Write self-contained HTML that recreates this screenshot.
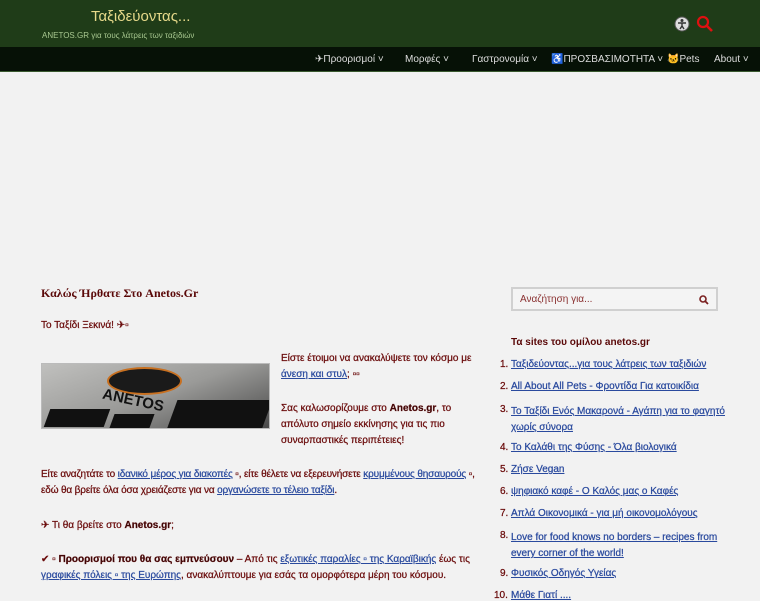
<!DOCTYPE html>
<html><head><meta charset="utf-8"><style>
*{margin:0;padding:0;box-sizing:border-box}
body{width:760px;height:600px;overflow:hidden;background:#f2f2f2;font-family:"Liberation Sans",sans-serif;color:#6a0b0b;position:relative}
.hdr{position:absolute;left:0;top:0;width:760px;height:47px;background:#1f3c18}
.t1{position:absolute;left:91px;top:8px;font-size:15px;color:#e6d98a}
.t2{position:absolute;left:42px;top:31px;font-size:8px;color:#a8c890}
.nav{position:absolute;left:0;top:47px;width:760px;height:25px;background:#061106;border-bottom:1px solid #3a5a30}
.nav span{position:absolute;top:7px;font-size:10px;color:#ddd}
.a{position:absolute;font-size:10px;line-height:16px;-webkit-text-stroke:0.25px #6a0b0b}
a{color:#2a4a9e;text-decoration:underline;-webkit-text-stroke:0.25px #2a4a9e}
b{color:#3a0606}
.side{position:absolute;left:511px;font-size:10px;color:#2a4a9e;text-decoration:underline;-webkit-text-stroke:0.25px #2a4a9e}
.num{position:absolute;font-size:10px;color:#6a0b0b;-webkit-text-stroke:0.25px #6a0b0b}
</style></head><body>
<div class="hdr"><div class="t1">Ταξιδεύοντας...</div><div class="t2">ANETOS.GR για τους λάτρεις των ταξιδιών</div>
<svg style="position:absolute;left:674px;top:16px" width="16" height="16"><circle cx="8" cy="8" r="7" fill="#ddd" stroke="#555"/><circle cx="8" cy="4.5" r="1.5" fill="#333"/><path d="M4 7h8M8 7v3l-2 3M8 10l2 3" stroke="#333" stroke-width="1.4" fill="none"/></svg>
<svg style="position:absolute;left:696px;top:15px" width="18" height="18"><circle cx="7" cy="7" r="5" stroke="#e01010" stroke-width="2.2" fill="none"/><path d="M11 11l5 5" stroke="#e01010" stroke-width="2.6"/></svg></div>
<div class="nav"><span style="left:315px">✈Προορισμοί ˅</span><span style="left:405px">Μορφές ˅</span><span style="left:472px">Γαστρονομία ˅</span><span style="left:551px">♿ΠΡΟΣΒΑΣΙΜΟΤΗΤΑ ˅</span><span style="left:667px">🐱Pets</span><span style="left:714px">About ˅</span></div>
<div style="position:absolute;left:41px;top:286px;font-family:'Liberation Serif',serif;font-weight:bold;font-size:12px;color:#5a0808">Καλώς Ήρθατε Στο Anetos.Gr</div>
<div class="a" style="left:41px;top:318px">Το Ταξίδι Ξεκινά! ✈▫</div>
<div style="position:absolute;left:41px;top:363px;width:229px;height:66px;background:linear-gradient(160deg,#c0c0be,#9a9a98 50%,#4a4a4a);border:1px solid #bbb;overflow:hidden"><div style="position:absolute;left:65px;top:3px;width:75px;height:28px;border-radius:50%;background:#1a1a1a;border:2px solid #c87020"></div><div style="position:absolute;left:60px;top:28px;font-weight:bold;font-size:15px;color:#111;transform:rotate(12deg)">ANETOS</div><div style="position:absolute;left:5px;top:45px;width:60px;height:18px;background:#111;transform:skew(-20deg)"></div><div style="position:absolute;left:130px;top:36px;width:95px;height:30px;background:#111;transform:skew(-20deg)"></div><div style="position:absolute;left:70px;top:50px;width:40px;height:14px;background:#111;transform:skew(-20deg)"></div></div>
<div class="a" style="left:281px;top:351px">Είστε έτοιμοι να ανακαλύψετε τον κόσμο με<br><a>άνεση και στυλ</a>; ▫▫</div>
<div class="a" style="left:281px;top:401px">Σας καλωσορίζουμε στο <b>Anetos.gr</b>, το<br>απόλυτο σημείο εκκίνησης για τις πιο<br>συναρπαστικές περιπέτειες!</div>
<div class="a" style="left:41px;top:467px;letter-spacing:-0.15px">Είτε αναζητάτε το <a>ιδανικό μέρος για διακοπές</a> ▫, είτε θέλετε να εξερευνήσετε <a>κρυμμένους θησαυρούς</a> ▫,<br>εδώ θα βρείτε όλα όσα χρειάζεστε για να <a>οργανώσετε το τέλειο ταξίδι</a>.</div>
<div class="a" style="left:41px;top:518px">✈ Τι θα βρείτε στο <b>Anetos.gr</b>;</div>
<div class="a" style="left:41px;top:552px">✔ ▫ <b>Προορισμοί που θα σας εμπνεύσουν</b> – Από τις <a>εξωτικές παραλίες ▫ της Καραϊβικής</a> έως τις<br><a>γραφικές πόλεις ▫ της Ευρώπης</a>, ανακαλύπτουμε για εσάς τα ομορφότερα μέρη του κόσμου.</div>
<div style="position:absolute;left:511px;top:287px;width:207px;height:24px;border:2px solid #d0d0d0;background:#f4f4f4"><span style="position:absolute;left:7px;top:5px;font-size:10px;color:#8a3030">Αναζήτηση για...</span><svg style="position:absolute;left:186px;top:6px" width="10" height="10"><circle cx="4" cy="4" r="3" stroke="#7a2020" stroke-width="1.6" fill="none"/><path d="M6 6l3 3" stroke="#7a2020" stroke-width="1.8"/></svg></div>
<div style="position:absolute;left:511px;top:337px;font-size:10px;font-weight:bold;color:#5a0808">Τα sites του ομίλου anetos.gr</div>
<span class="num" style="left:500px;top:359px">1.</span><span class="side" style="top:359px">Ταξιδεύοντας...για τους λάτρεις των ταξιδιών</span>
<span class="num" style="left:500px;top:381px">2.</span><span class="side" style="top:381px">All About All Pets - Φροντίδα Για κατοικίδια</span>
<span class="num" style="left:500px;top:404px">3.</span><span class="side" style="top:404px;line-height:16px;width:215px">Το Ταξίδι Ενός Μακαρονά - Αγάπη για το φαγητό χωρίς σύνορα</span>
<span class="num" style="left:500px;top:442px">4.</span><span class="side" style="top:442px">Το Καλάθι της Φύσης - Όλα βιολογικά</span>
<span class="num" style="left:500px;top:464px">5.</span><span class="side" style="top:464px">Ζήσε Vegan</span>
<span class="num" style="left:500px;top:486px">6.</span><span class="side" style="top:486px">ψηφιακό καφέ - Ο Καλός μας ο Καφές</span>
<span class="num" style="left:500px;top:508px">7.</span><span class="side" style="top:508px">Απλά Οικονομικά - για μή οικονομολόγους</span>
<span class="num" style="left:500px;top:530px">8.</span><span class="side" style="top:530px;line-height:16px;width:210px">Love for food knows no borders – recipes from every corner of the world!</span>
<span class="num" style="left:500px;top:568px">9.</span><span class="side" style="top:568px">Φυσικός Οδηγός Υγείας</span>
<span class="num" style="left:494px;top:590px">10.</span><span class="side" style="top:590px">Μάθε Γιατί ....</span>
</body></html>
